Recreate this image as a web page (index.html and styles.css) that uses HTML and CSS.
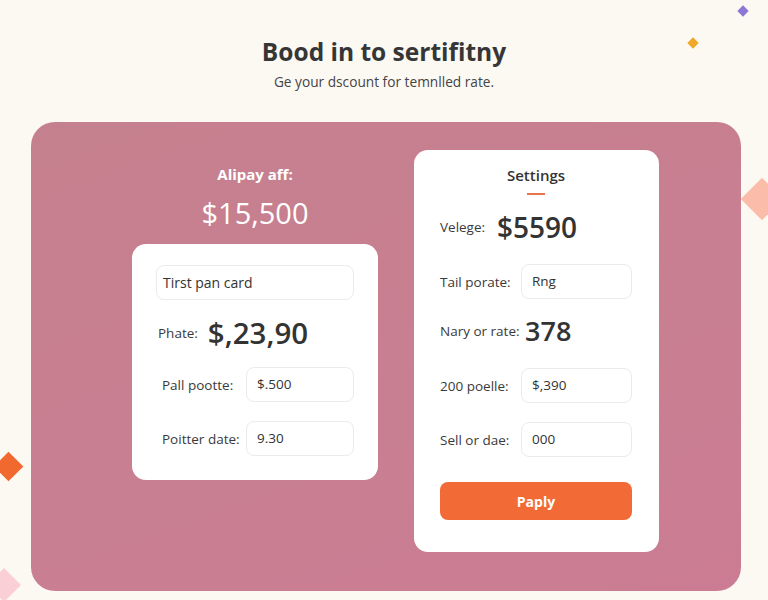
FILE: index.html
```html
<!DOCTYPE html>
<html>
<head>
<meta charset="utf-8">
<link rel="stylesheet" href="styles.css">
</head>
<body>
<span class="gem gem-purple"></span>
<span class="gem gem-yellow"></span>
<span class="gem gem-peach"></span>
<span class="gem gem-orange"></span>
<span class="gem gem-pink"></span>

<div class="header">
  <h1>Bood in to sertifitny</h1>
  <p>Ge your dscount for temnlled rate.</p>
</div>

<div class="panel">
  <div class="left-col">
    <div class="pay-title">Alipay aff:</div>
    <div class="pay-amount">$15,500</div>
    <div class="card card-left">
      <div class="field field-wide">Tirst pan card</div>
      <div class="row row-big">
        <span class="label">Phate:</span>
        <span class="big">$,23,90</span>
      </div>
      <div class="row">
        <span class="label label-in">Pall pootte:</span>
        <div class="field">$.500</div>
      </div>
      <div class="row">
        <span class="label label-in">Poitter date:</span>
        <div class="field">9.30</div>
      </div>
    </div>
  </div>

  <div class="card card-right">
    <div class="settings">Settings</div>
    <div class="underline"></div>
    <div class="row row-big">
      <span class="label">Velege:</span>
      <span class="big big-first">$5590</span>
    </div>
    <div class="row">
      <span class="label">Tail porate:</span>
      <div class="field">Rng</div>
    </div>
    <div class="row row-big">
      <span class="label">Nary or rate:</span>
      <span class="big big-rate">378</span>
    </div>
    <div class="row">
      <span class="label">200 poelle:</span>
      <div class="field">$,390</div>
    </div>
    <div class="row">
      <span class="label">Sell or dae:</span>
      <div class="field">000</div>
    </div>
    <button class="apply">Paply</button>
  </div>
</div>
</body>
</html>
```
FILE: styles.css
```css
body {
  margin: 0;
  background-color: #fcf9f3;
  font-family: "Open Sans", "Noto Sans", sans-serif;
  color: #333;
  height: 600px;
  overflow: hidden;
  position: relative;
}

.header {
  text-align: center;
  padding-top: 34px;
}
.header h1 {
  margin: 0;
  font-size: 24.5px;
  font-weight: 700;
  line-height: 36px;
  color: #363636;
}
.header p {
  margin: 2px 0 0;
  font-size: 13.7px;
  line-height: 20px;
  color: #444;
}

.panel {
  margin: 30px 27px 0 31px;
  height: 469px;
  border-radius: 24px;
  background: linear-gradient(160deg, #c5808d 0%, #c97f92 60%, #cb7c94 100%);
  display: flex;
  align-items: flex-start;
  gap: 36px;
  padding: 28px 0 0 101px;
  box-sizing: border-box;
}

.left-col {
  width: 246px;
  padding-top: 14px;
  text-align: center;
  color: #fff;
}
.pay-title {
  font-size: 15px;
  font-weight: 700;
  line-height: 20px;
}
.pay-amount {
  font-size: 29px;
  line-height: 34px;
  margin-top: 12px;
  margin-bottom: 14px;
}

.card {
  background-color: #fff;
  border-radius: 14px;
  box-sizing: border-box;
  text-align: left;
  color: #333;
}
.card-left {
  padding: 21px 24px 24px 24px;
}
.card-right {
  width: 245px;
  padding: 14px 27px 32px 26px;
}

.field {
  height: 35px;
  box-sizing: border-box;
  border: 1px solid #ebebeb;
  border-radius: 8px;
  padding: 0 10px;
  font-size: 13.5px;
  line-height: 33px;
  color: #333;
  flex: 1;
}
.field-wide {
  padding: 0 6px;
  font-size: 14px;
}

.row {
  display: flex;
  align-items: center;
  margin-top: 19px;
}
.row-big {
  margin-top: 14px;
  height: 36px;
}
.card-left .row-big {
  margin: 15px 0 -3px 2px;
}
.label {
  font-size: 13.5px;
  color: #3a3a3a;
  width: 81px;
  flex-shrink: 0;
}
.card-left .label {
  width: auto;
  margin-right: 12px;
}
.card-left .label-in {
  width: 84px;
  margin-left: 6px;
  margin-right: 0;
}
.big {
  font-size: 27px;
  font-weight: 600;
  color: #333;
  line-height: 36px;
}
.card-left .big {
  font-size: 29.5px;
  margin-left: -2px;
}
.big-first {
  margin-left: -24px;
  font-size: 28px;
}
.big-rate {
  margin-left: 4px;
}

.settings {
  text-align: center;
  font-size: 15px;
  font-weight: 600;
  line-height: 22px;
}
.underline {
  width: 18px;
  height: 2px;
  background-color: #e8734a;
  margin: 7px auto 0;
}

.apply {
  display: block;
  width: 100%;
  height: 38px;
  margin-top: 25px;
  border: none;
  border-radius: 8px;
  background-color: #f26a35;
  color: #fff;
  font-family: "Open Sans", "Noto Sans", sans-serif;
  font-size: 14px;
  font-weight: 700;
}

.gem {
  position: absolute;
  transform: rotate(45deg);
  display: block;
}
.gem-purple {
  left: 739px;
  top: 7px;
  width: 8px;
  height: 8px;
  background-color: #8d78d6;
}
.gem-yellow {
  left: 689px;
  top: 39px;
  width: 8px;
  height: 8px;
  background-color: #f0a72a;
}
.gem-peach {
  left: 747px;
  top: 184px;
  width: 30px;
  height: 30px;
  background-color: #fbbcaa;
}
.gem-orange {
  left: -2px;
  top: 456px;
  width: 21px;
  height: 21px;
  background-color: #f2692f;
}
.gem-pink {
  left: -8px;
  top: 573px;
  width: 24px;
  height: 24px;
  background-color: #fbcfd6;
}
```
